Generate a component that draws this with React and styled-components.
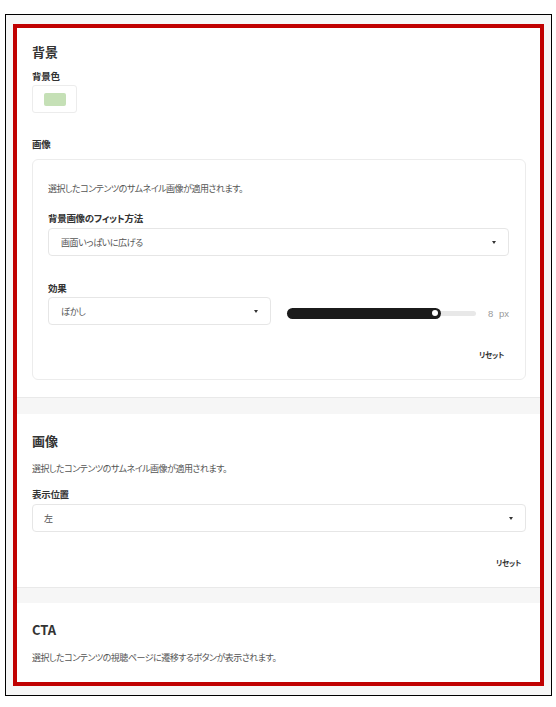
import React from 'react';
import styled, { createGlobalStyle } from 'styled-components';

const GlobalStyle = createGlobalStyle`
  body {
    margin: 0;
    background: #fff;
    font-family: "Noto Sans CJK JP", "Noto Sans", sans-serif;
    font-feature-settings: "palt";
    color: #333;
  }
`;

function Select({ value, inset }) {
  return (
    <SelectBox $inset={inset}>
      <span>{value}</span>
      <Caret />
    </SelectBox>
  );
}

function Slider({ value, max }) {
  const pct = (value / max) * 100;
  return (
    <SliderWrap>
      <Track>
        <Filled style={{ width: `${pct}%` }} />
        <Rest />
      </Track>
      <Value>
        <span>{value}</span>
        <span>px</span>
      </Value>
    </SliderWrap>
  );
}

function App() {
  return (
    <>
      <GlobalStyle />
      <Frame>
        <Highlight>
          <Section>
            <Heading>背景</Heading>
            <Label $top={8}>背景色</Label>
            <SwatchButton>
              <Swatch $color="#c5e0b6" />
            </SwatchButton>
            <Label $top={24}>画像</Label>
            <Card>
              <Description>選択したコンテンツのサムネイル画像が適用されます。</Description>
              <Label $top={15}>背景画像のフィット方法</Label>
              <Field>
                <Select value="画面いっぱいに広げる" inset={12} />
              </Field>
              <Label $top={25}>効果</Label>
              <EffectRow>
                <EffectSelect>
                  <Select value="ぼかし" inset={12} />
                </EffectSelect>
                <Slider value={8} max={9.8} />
              </EffectRow>
              <ResetRow $top={23}>
                <ResetButton>リセット</ResetButton>
              </ResetRow>
            </Card>
          </Section>
          <Divider />
          <Section $top={18}>
            <Heading>画像</Heading>
            <Description $top={12}>選択したコンテンツのサムネイル画像が適用されます。</Description>
            <Label $top={11}>表示位置</Label>
            <Field>
              <Select value="左" inset={11} />
            </Field>
            <ResetRow $top={24}>
              <ResetButton>リセット</ResetButton>
            </ResetRow>
          </Section>
          <Divider $thin />
          <Section $top={18}>
            <Heading>CTA</Heading>
            <Description $top={12}>選択したコンテンツの視聴ページに遷移するボタンが表示されます。</Description>
          </Section>
        </Highlight>
      </Frame>
    </>
  );
}

export default App;

const Frame = styled.div`
  box-sizing: border-box;
  margin: 14px 0 0 5px;
  width: 547px;
  height: 682px;
  border: 1px solid #000;
  background: #f6f6f6;
  padding: 9px 7px 6px 7px;
`;

const Highlight = styled.div`
  border: 4px solid #c00000;
  background: #fff;
  display: flex;
  flex-direction: column;
`;

const Section = styled.section`
  background: #fff;
  padding: ${(p) => p.$top ?? 15}px 14px 17px 15px;
`;

const Divider = styled.div`
  height: ${(p) => (p.$thin ? 15 : 16)}px;
  background: #f6f6f6;
  border-top: 1px solid #e9e9e9;
`;

const Heading = styled.h2`
  margin: 0;
  font-size: 13px;
  line-height: 18px;
  font-weight: 700;
  color: #333;
`;

const Label = styled.div`
  margin-top: ${(p) => p.$top ?? 0}px;
  font-size: 9.5px;
  line-height: 14px;
  font-weight: 700;
  letter-spacing: -0.3px;
  color: #333;
`;

const Description = styled.p`
  margin: ${(p) => p.$top ?? 0}px 0 0;
  font-size: 9px;
  line-height: 14px;
  letter-spacing: -0.5px;
  color: #555;
`;

const SwatchButton = styled.div`
  box-sizing: border-box;
  margin-top: 2px;
  width: 45px;
  height: 28px;
  border: 1px solid #ececec;
  border-radius: 3px;
  display: flex;
  align-items: center;
  justify-content: center;
`;

const Swatch = styled.div`
  width: 22px;
  height: 13px;
  border-radius: 2px;
  background: ${(p) => p.$color};
`;

const Card = styled.div`
  margin-top: 8px;
  border: 1px solid #ececec;
  border-radius: 6px;
  padding: 22px 16px 17px 15px;
`;

const Field = styled.div`
  margin-top: ${(p) => p.$top ?? 3}px;
`;

const SelectBox = styled.div`
  box-sizing: border-box;
  height: 28px;
  border: 1px solid #e6e6e6;
  border-radius: 4px;
  display: flex;
  align-items: center;
  justify-content: space-between;
  padding: 0 12px 0 ${(p) => p.$inset}px;
  font-size: 9px;
  letter-spacing: -0.4px;
  color: #555;
`;

const Caret = styled.span`
  width: 0;
  height: 0;
  border-left: 2.5px solid transparent;
  border-right: 2.5px solid transparent;
  border-top: 3px solid #333;
`;

const EffectRow = styled.div`
  margin-top: 2px;
  display: flex;
  align-items: center;
  gap: 16px;
`;

const EffectSelect = styled.div`
  flex: 0 0 223px;
`;

const SliderWrap = styled.div`
  flex: 1;
  display: flex;
  align-items: center;
  gap: 12px;
  margin-top: 4px;
`;

const Track = styled.div`
  flex: 1;
  display: flex;
  align-items: center;
`;

const Filled = styled.div`
  position: relative;
  height: 11px;
  border-radius: 6px;
  background: #1b1b1b;
  flex: none;

  &::after {
    content: '';
    position: absolute;
    right: 3px;
    top: 50%;
    width: 6px;
    height: 6px;
    margin-top: -3px;
    border-radius: 50%;
    background: #fff;
  }
`;

const Rest = styled.div`
  flex: 1;
  height: 5px;
  background: #e8e8e8;
  border-radius: 0 3px 3px 0;
`;

const Value = styled.div`
  width: 21px;
  display: flex;
  justify-content: space-between;
  font-family: "Liberation Sans", sans-serif;
  font-size: 9.5px;
  color: #999;
`;

const ResetRow = styled.div`
  margin-top: ${(p) => p.$top}px;
  display: flex;
  justify-content: flex-end;
  padding-right: 5px;
`;

const ResetButton = styled.span`
  font-size: 7.5px;
  line-height: 14px;
  font-weight: 700;
  letter-spacing: -0.3px;
  color: #333;
`;
